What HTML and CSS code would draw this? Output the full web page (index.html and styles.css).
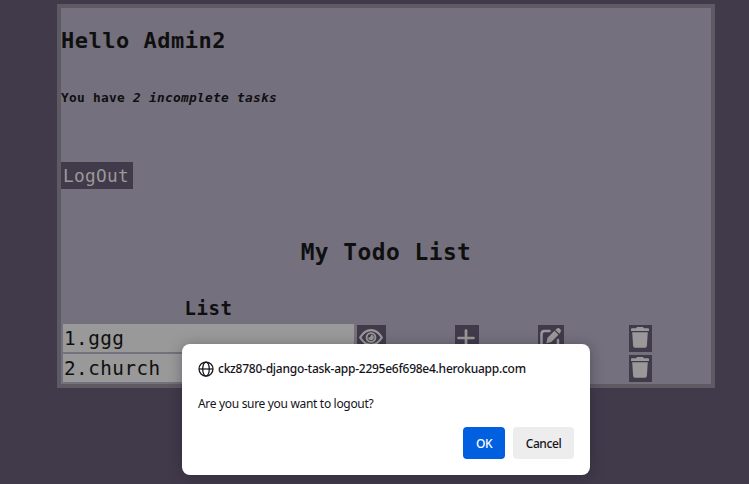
FILE: index.html
```html
<!DOCTYPE html>
<html lang="en">
<head>
<meta charset="utf-8">
<title>My Todo List</title>
<link rel="stylesheet" href="styles.css">
</head>
<body>
<svg class="symbols" width="0" height="0">
  <symbol id="eye" viewBox="0 0 24 24"><path d="M1.200 12C4 7.200 7.600 4.700 12 4.700S20 7.200 22.800 12C20 16.800 16.400 19.300 12 19.300S4 16.800 1.200 12Z" fill="none" stroke="currentColor" stroke-width="2.200"/><circle cx="12" cy="12" r="4.400" fill="none" stroke="currentColor" stroke-width="1.900"/><path d="M12 9.200a2.800 2.800 0 1 1-2.800 2.800q2.800 0 2.800-2.800Z" fill="currentColor"/></symbol>
  <symbol id="plus" viewBox="0 0 20 20"><path d="M10 2.500v15M2.500 10h15" fill="none" stroke="currentColor" stroke-width="2.700" stroke-linecap="round"/></symbol>
  <symbol id="edit" viewBox="0 0 22 22"><path d="M9.500 4H4.500Q1.500 4 1.500 7V17.500Q1.500 20.500 4.500 20.500H15Q18 20.500 18 17.500V13" fill="none" stroke="currentColor" stroke-width="2.500" stroke-linecap="round"/><path d="M6.300 16.200l1.200-5.400L14.500 3.800l3.900 3.900L11.400 14.900ZM15.400 2.900l1.200-1.200q1.700-1.500 3.500.2t.2 3.600l-1 1.200Z" fill="currentColor"/></symbol>
  <symbol id="trash" viewBox="0 0 18 21"><path d="M0 2.200Q0 1.300 1 1.300H5L6 0h6l1 1.300h4q1 0 1 .9V4H0ZM1.200 5.200h15.600l-.9 13.600q-.1 2-2 2H4.100q-1.900 0-2-2Z" fill="currentColor"/></symbol>
</svg>
<main class="panel">
  <h1 class="greeting">Hello Admin2</h1>
  <p class="summary">You have <em>2 incomplete tasks</em></p>
  <button class="logout">LogOut</button>
  <h2 class="title">My Todo List</h2>
  <section class="list">
    <h3 class="list-head">List</h3>
    <div class="row">
      <span class="task">1.ggg</span>
      <button class="icon view" aria-label="View"><svg width="24" height="25"><use href="#eye"/></svg></button>
      <button class="icon add" aria-label="Add"><svg width="20" height="20"><use href="#plus"/></svg></button>
      <button class="icon edit" aria-label="Edit"><svg width="22" height="22"><use href="#edit"/></svg></button>
      <button class="icon delete" aria-label="Delete"><svg width="18" height="21"><use href="#trash"/></svg></button>
    </div>
    <div class="row">
      <span class="task">2.church</span>
      <button class="icon view" aria-label="View"><svg width="24" height="25"><use href="#eye"/></svg></button>
      <button class="icon add" aria-label="Add"><svg width="20" height="20"><use href="#plus"/></svg></button>
      <button class="icon edit" aria-label="Edit"><svg width="22" height="22"><use href="#edit"/></svg></button>
      <button class="icon delete" aria-label="Delete"><svg width="18" height="21"><use href="#trash"/></svg></button>
    </div>
  </section>
</main>
<div class="dialog" role="dialog">
  <div class="origin">
    <svg class="globe" width="16" height="16" viewBox="0 0 16 16" fill="none" stroke="currentColor" stroke-width="1.250"><circle cx="8" cy="8" r="7"/><ellipse cx="8" cy="8" rx="3.300" ry="7"/><path d="M1 8h14"/></svg>
    <span class="host">ckz8780-django-task-app-2295e6f698e4.herokuapp.com</span>
  </div>
  <p class="message">Are you sure you want to logout?</p>
  <div class="actions">
    <button class="action primary">OK</button>
    <button class="action">Cancel</button>
  </div>
</div>
</body>
</html>
```
FILE: styles.css
```css
* { box-sizing: border-box; }
body {
  margin: 0;
  height: 484px;
  overflow: hidden;
  padding: 4px 34px 0 57px;
  background: #413a4b;
  color: #0f0f10;
  font-family: "DejaVu Sans Mono", monospace;
}
.symbols { display: block; position: absolute; }
h1, h2, h3, p { margin: 0; white-space: nowrap; }
button { border: 0; padding: 0; font-family: inherit; }
.panel {
  height: 384px;
  border: 4px solid #5e5a64;
  background: #74707d;
}
.greeting {
  padding-top: 18px;
  font-size: 22px;
  line-height: 30px;
  letter-spacing: .51px;
}
.summary {
  margin-top: 32px;
  font-size: 12.8px;
  font-weight: bold;
  line-height: 20px;
  letter-spacing: .3px;
}
.logout {
  display: block;
  width: 72px;
  height: 27px;
  margin-top: 54px;
  padding-left: 2px;
  text-align: left;
  background: #413a4b;
  color: #999;
  font-size: 17.8px;
  letter-spacing: .28px;
}
.title {
  margin-top: 46px;
  text-align: center;
  font-size: 22.8px;
  line-height: 34px;
  letter-spacing: .5px;
}
.list { padding: 0 2px; }
.list-head {
  width: 291px;
  margin-top: 24px;
  text-align: center;
  font-size: 19px;
  line-height: 30px;
  letter-spacing: .6px;
}
.row {
  display: grid;
  grid-template-columns: 294px 98px 83px 91px auto;
  height: 28px;
  margin-bottom: 2px;
}
.list-head + .row { margin-top: 1px; }
.task {
  width: 291px;
  height: 28px;
  padding: 1px 0 0 1px;
  background: #999;
  font-size: 19.3px;
  line-height: 27px;
  letter-spacing: .48px;
}
.icon {
  display: flex;
  justify-content: center;
  height: 27px;
  margin-top: 1px;
  background: #413a4b;
  color: #999;
}
.view { width: 29px; padding-right: 2px; }
.add { width: 24px; padding: 3px 2px 0 0; }
.edit { width: 26px; padding: 2px 1px 0 0; }
.delete { width: 23px; padding: 2px 1px 0 0; }
.dialog {
  position: absolute;
  left: 182px;
  top: 344px;
  width: 408px;
  height: 131px;
  padding: 16px;
  border-radius: 8px;
  background: #fff;
  color: #15141a;
  box-shadow: 0 2px 14px rgba(20, 18, 28, .35);
  font-family: "Noto Sans", "Open Sans", sans-serif;
  font-size: 12px;
}
.origin { display: flex; align-items: center; gap: 4px; height: 17px; white-space: nowrap; }
.host { font-weight: 500; letter-spacing: -.25px; }
.message { margin-top: 18px; line-height: 18px; letter-spacing: -.32px; }
.actions { display: flex; justify-content: flex-end; gap: 8px; margin-top: 14px; }
.action {
  width: 61px;
  height: 32px;
  border-radius: 4px;
  background: #ededed;
  color: #15141a;
  font-size: 12px;
  font-weight: 500;
  letter-spacing: -.4px;
}
.primary { width: 42px; background: #0060df; color: #fff; }
```
